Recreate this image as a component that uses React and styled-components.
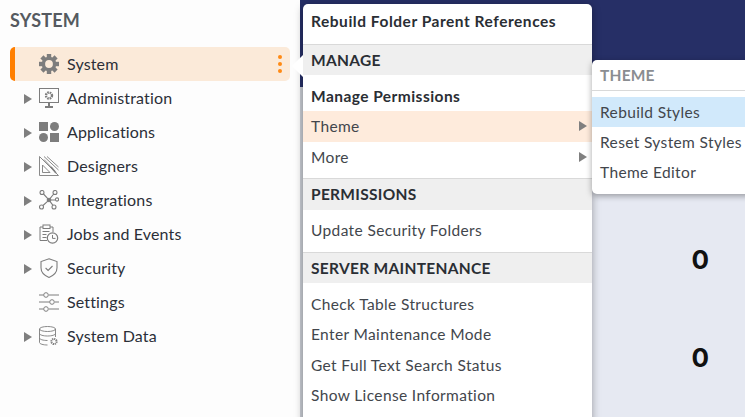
import React from "react";
import styled, { createGlobalStyle } from "styled-components";

const GlobalStyle = createGlobalStyle`
    html, body {
        margin: 0;
        padding: 0;
        height: 100%;
        overflow: hidden;
        font-family: "Lato", "Open Sans", sans-serif;
    }
`;

const Page = styled.div`
    position: relative;
    display: flex;
    width: 745px;
    height: 417px;
    overflow: hidden;
`;

// Left navigation
const Sidebar = styled.aside`
    width: 300px;
    flex: none;
    background: #fdfdfd;
    padding: 10px 10px 0;
    box-sizing: border-box;
`;

const SidebarTitle = styled.h2`
    margin: 0 0 16px;
    font-size: 18px;
    line-height: 21px;
    font-weight: 700;
    letter-spacing: 0.2px;
    color: #555a60;
`;

const NavList = styled.div`
    display: flex;
    flex-direction: column;
    width: 280px;
`;

const NavRow = styled.div`
    position: relative;
    height: 34px;
    display: flex;
    align-items: center;
    box-sizing: border-box;
    padding-left: ${({ $active }) => ($active ? "9px" : "14px")};
    border-left: ${({ $active }) => ($active ? "5px solid #ff7f00" : "none")};
    border-radius: 5px;
    background: ${({ $active }) => ($active ? "#fbead9" : "transparent")};
`;

const Caret = styled.span`
    width: 0;
    height: 0;
    flex: none;
    margin-top: 1px;
    border-style: solid;
    border-width: 5.5px 0 5.5px 8px;
    border-color: transparent transparent transparent #7f7f7f;
    visibility: ${({ $hidden }) => ($hidden ? "hidden" : "visible")};
`;

const NavIcon = styled.span`
    width: 20px;
    height: 20px;
    margin: 0 8px 0 7px;
    flex: none;
    display: flex;
    color: #7d7d7d;

    svg {
        width: 20px;
        height: 20px;
    }
`;

const NavLabel = styled.span`
    margin-bottom: 2px;
    font-size: 16px;
    letter-spacing: 0.15px;
    color: #2b2f38;
`;

const Dots = styled.span`
    position: absolute;
    right: 8px;
    top: 8px;
    display: flex;
    flex-direction: column;
    gap: 3px;

    i {
        display: block;
        width: 4px;
        height: 4px;
        border-radius: 50%;
        background: #ff8a14;
    }
`;

// Dashboard behind the menus
const Main = styled.main`
    flex: 1;
    display: flex;
    flex-direction: column;
    background: #e6e9f2;
    border-left: 3px solid #c9cdd4;
`;

const TopBand = styled.div`
    height: 87px;
    margin-left: -3px;
    background: #262f66;
`;

const Counts = styled.div`
    display: flex;
    flex-direction: column;
    align-items: flex-end;
    gap: 73px;
    padding: 160px 36px 0 0;
`;

const Count = styled.div`
    font-family: "Inter", sans-serif;
    font-size: 26px;
    line-height: 25px;
    font-weight: 700;
    color: #111;
`;

// Popup menus
const Menu = styled.div`
    position: absolute;
    left: 303px;
    top: 4px;
    width: 289px;
    height: 430px;
    background: #fff;
    border-radius: 5px 5px 0 0;
    box-shadow: 0 2px 8px rgba(0, 0, 0, 0.35);
`;

const Pointer = styled.span`
    position: absolute;
    left: -11px;
    top: 51px;
    width: 0;
    height: 0;
    border-style: solid;
    border-width: 11px 11px 11px 0;
    border-color: transparent #fff transparent transparent;
`;

const TopAction = styled.div`
    height: 33px;
    padding: 7px 8px 0;
    font-size: 15.5px;
    line-height: 21px;
    font-weight: 700;
    letter-spacing: 0.53px;
    color: #2a2e34;
    border-bottom: 1px solid #d9d9d9;
`;

const SectionHead = styled.div`
    height: ${({ $h }) => $h || "30px"};
    padding: 0 8px 1px;
    box-sizing: border-box;
    display: flex;
    align-items: center;
    background: #efefef;
    font-size: 15.5px;
    font-weight: 700;
    letter-spacing: 0.3px;
    color: #2a2e34;
`;

const Group = styled.div`
    padding: 6px 0 ${({ $pb }) => $pb || "6px"};
    border-bottom: ${({ $last }) => ($last ? "none" : "1px solid #d9d9d9")};
`;

const Item = styled.div`
    height: ${({ $h }) => $h || "30.5px"};
    padding: 0 8px 1px;
    box-sizing: border-box;
    display: flex;
    align-items: center;
    justify-content: space-between;
    font-size: 15.5px;
    letter-spacing: ${({ $strong }) => ($strong ? "0.45px" : "0.37px")};
    font-weight: ${({ $strong }) => ($strong ? 700 : 400)};
    color: ${({ $strong }) => ($strong ? "#2a2e34" : "#42464c")};
    background: ${({ $hl }) => $hl || "transparent"};
`;

const SubArrow = styled.span`
    width: 0;
    height: 0;
    margin-right: -3px;
    border-style: solid;
    border-width: 5.5px 0 5.5px 8px;
    border-color: transparent transparent transparent #7f7f7f;
`;

const SubMenu = styled.div`
    position: absolute;
    left: 592px;
    top: 60px;
    width: 180px;
    height: 134px;
    background: #fff;
    border-radius: 5px;
    box-shadow: 0 2px 6px rgba(0, 0, 0, 0.35);
`;

const SubHead = styled.div`
    height: 30px;
    padding: 0 8px;
    display: flex;
    align-items: center;
    margin-bottom: 6px;
    border-bottom: 1px solid #d9d9d9;
    font-size: 15.5px;
    font-weight: 700;
    letter-spacing: 0.2px;
    color: #8a8d91;
`;

const navItems = [
    { label: "Administration", icon: "admin" },
    { label: "Applications", icon: "apps" },
    { label: "Designers", icon: "designers" },
    { label: "Integrations", icon: "integrations" },
    { label: "Jobs and Events", icon: "jobs" },
    { label: "Security", icon: "security" },
    { label: "Settings", icon: "settings", leaf: true },
    { label: "System Data", icon: "data" },
];

const icons = {
    system: (
        <svg viewBox="0 0 20 20" fill="currentColor">
            <circle cx="10" cy="10" r="5.6" fill="none" stroke="currentColor" strokeWidth="3.4" />
            {[0, 45, 90, 135, 180, 225, 270, 315].map((a) => (
                <rect key={a} x="7.8" y="0" width="4.4" height="4" transform={`rotate(${a} 10 10)`} />
            ))}
        </svg>
    ),
    admin: (
        <svg viewBox="0 0 20 20" fill="none" stroke="currentColor">
            <rect x="0.5" y="0.5" width="19" height="14" strokeWidth="1" />
            <circle cx="10" cy="7.5" r="3" strokeWidth="2.4" strokeDasharray="1.6 0.8" />
            <path d="M6 19h8M10 15v3.5" strokeWidth="2" />
        </svg>
    ),
    apps: (
        <svg viewBox="0 0 20 20" fill="currentColor">
            <rect x="0" y="0" width="9" height="9" />
            <circle cx="15.5" cy="4.5" r="4.5" />
            <circle cx="4.5" cy="15.5" r="4.5" />
            <rect x="11" y="11" width="9" height="9" />
        </svg>
    ),
    designers: (
        <svg viewBox="0 0 20 20" fill="none" stroke="currentColor" strokeWidth="0.9">
            <path d="M0.5 0.5v19h19z" />
            <path d="M3.5 9v7.5H11z" />
            <path d="M5 0.5L19.5 14M8 0.5L19.5 11M5 3.5L16 15" />
            <path d="M12 11l5 6" strokeWidth="1.6" />
        </svg>
    ),
    integrations: (
        <svg viewBox="0 0 20 20" fill="none" stroke="currentColor" strokeWidth="1.1">
            <circle cx="3" cy="2.5" r="2" />
            <circle cx="16" cy="2.5" r="2" />
            <circle cx="2.5" cy="17" r="2" />
            <circle cx="15" cy="17" r="2" />
            <circle cx="18" cy="9.5" r="1.6" />
            <circle cx="10" cy="10" r="1.8" fill="currentColor" />
            <path d="M4.5 4L9 8.8M14.7 4L11 8.6M4 15.5L8.8 11.2M14 15.4L11 11.4M12 10h4.4" />
        </svg>
    ),
    jobs: (
        <svg viewBox="0 0 20 20" fill="none" stroke="currentColor" strokeWidth="1">
            <path d="M8 16.5H1V3h3M11 3h3v5" />
            <rect x="4" y="1" width="7" height="3.5" />
            <path d="M3.5 7.5h7M3.5 10.5h4M3.5 13.5h4" />
            <circle cx="13.5" cy="14" r="5.2" strokeWidth="1.2" />
            <path d="M13.5 11v3.4h3" />
        </svg>
    ),
    security: (
        <svg viewBox="0 0 20 20" fill="none" stroke="currentColor" strokeWidth="1.1">
            <path d="M10 0.8L18 3.6v6.2c0 4.6-3.4 7.8-8 9.6-4.6-1.8-8-5-8-9.6V3.6z" />
            <path d="M6.6 10l2.5 2.4 4.4-4.4" />
        </svg>
    ),
    settings: (
        <svg viewBox="0 0 20 20" fill="none" stroke="currentColor" strokeWidth="1">
            <path d="M0 3h4.5M10 3h10M0 10h10.5M16 10h4M0 17h4.5M10 17h10" />
            <circle cx="7" cy="3" r="2.3" />
            <circle cx="13" cy="10" r="2.3" />
            <circle cx="7" cy="17" r="2.3" />
        </svg>
    ),
    data: (
        <svg viewBox="0 0 20 20" fill="none" stroke="currentColor" strokeWidth="0.9">
            <ellipse cx="8.5" cy="3" rx="8" ry="2.5" />
            <path d="M0.5 3v13.5c0 1.4 3.6 2.5 8 2.5M16.5 3v8M0.5 7.5c0 1.4 3.6 2.5 8 2.5s8-1.1 8-2.5M0.5 12c0 1.4 3.6 2.5 8 2.5" />
            <circle cx="15" cy="15.5" r="2.6" strokeWidth="2" strokeDasharray="1.3 0.7" />
        </svg>
    ),
};

const App = () => (
    <Page>
        <GlobalStyle />
        <Sidebar>
            <SidebarTitle>SYSTEM</SidebarTitle>
            <NavList>
                <NavRow $active>
                    <Caret $hidden />
                    <NavIcon>{icons.system}</NavIcon>
                    <NavLabel>System</NavLabel>
                    <Dots><i /><i /><i /></Dots>
                </NavRow>
                {navItems.map((item) => (
                    <NavRow key={item.label}>
                        <Caret $hidden={item.leaf} />
                        <NavIcon>{icons[item.icon]}</NavIcon>
                        <NavLabel>{item.label}</NavLabel>
                    </NavRow>
                ))}
            </NavList>
        </Sidebar>
        <Main>
            <TopBand />
            <Counts>
                <Count>0</Count>
                <Count>0</Count>
            </Counts>
        </Main>
        <Menu>
            <Pointer />
            <TopAction>Rebuild Folder Parent References</TopAction>
            <SectionHead>MANAGE</SectionHead>
            <Group $pb="5px">
                <Item $h="30px" $strong>Manage Permissions</Item>
                <Item $h="31px" $hl="#feebdc">Theme<SubArrow /></Item>
                <Item>More<SubArrow /></Item>
            </Group>
            <SectionHead $h="31px">PERMISSIONS</SectionHead>
            <Group>
                <Item>Update Security Folders</Item>
            </Group>
            <SectionHead>SERVER MAINTENANCE</SectionHead>
            <Group $last>
                <Item>Check Table Structures</Item>
                <Item>Enter Maintenance Mode</Item>
                <Item>Get Full Text Search Status</Item>
                <Item>Show License Information</Item>
            </Group>
        </Menu>
        <SubMenu>
            <SubHead>THEME</SubHead>
            <Item $h="30px" $hl="#d1e9fb">Rebuild Styles</Item>
            <Item>Reset System Styles</Item>
            <Item>Theme Editor</Item>
        </SubMenu>
    </Page>
);

export default App;
